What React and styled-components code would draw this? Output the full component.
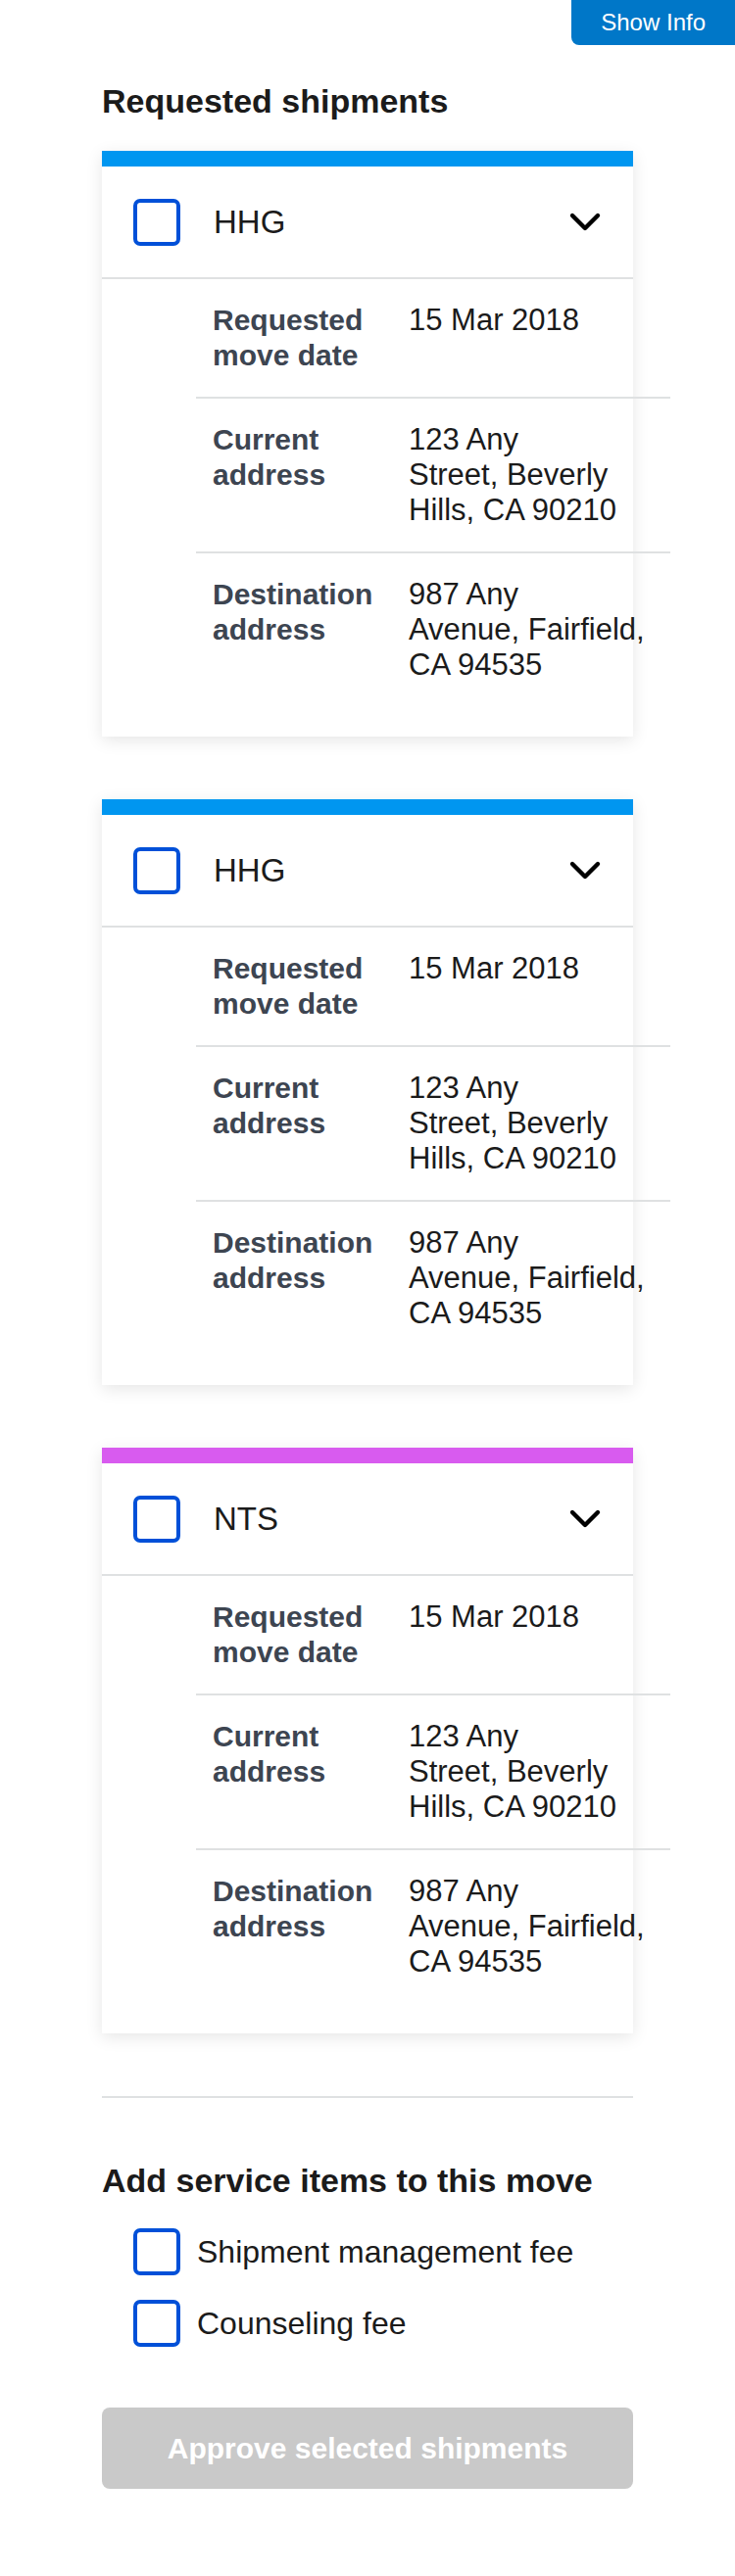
import React from "react";
import styled, { createGlobalStyle } from "styled-components";

const GlobalStyle = createGlobalStyle`
  html, body {
    margin: 0;
    padding: 0;
    background: #ffffff;
  }
  body {
    font-family: "Liberation Sans", Arial, sans-serif;
    color: #1b1b1b;
  }
  * { box-sizing: border-box; }
`;

const Page = styled.div`
  position: relative;
  width: 750px;
  min-height: 2630px;
  padding: 83px 104px 90px;
`;

const ShowInfo = styled.button`
  position: absolute;
  top: 0;
  right: 0;
  height: 46px;
  padding: 0 30px;
  border: none;
  border-bottom-left-radius: 8px;
  background: #0077c8;
  color: #ffffff;
  font-family: "Liberation Sans", Arial, sans-serif;
  font-size: 24px;
  line-height: 46px;
`;

const Heading = styled.h2`
  margin: ${(p) => p.$top || 0}px 0 0;
  font-size: 34px;
  line-height: 40px;
  font-weight: 700;
  color: #1b1b1b;
`;

const CardList = styled.div`
  display: flex;
  flex-direction: column;
  gap: 64px;
  margin-top: 31px;
`;

const Card = styled.section`
  background: #ffffff;
  border-top: 16px solid ${(p) => p.$accent};
  box-shadow: 0 4px 16px rgba(0, 0, 0, 0.1);
  padding-bottom: 31px;
`;

const CardHeader = styled.div`
  display: flex;
  align-items: center;
  height: 115px;
  padding: 0 32px;
  border-bottom: 2px solid #dfe1e2;
`;

const Box = styled.span`
  flex: none;
  width: 48px;
  height: 48px;
  border: 4px solid #0050d8;
  border-radius: 7px;
  background: #ffffff;
`;

const ShipmentType = styled.span`
  margin-left: 34px;
  font-size: 33px;
  line-height: 40px;
  color: #1b1b1b;
`;

const Chevron = styled.svg`
  margin-left: auto;
  flex: none;
`;

const InfoTable = styled.div`
  margin-left: 96px;
  width: 484px;
`;

const InfoRow = styled.div`
  display: grid;
  grid-template-columns: 200px 1fr;
  padding: 24px 0 24px 17px;
  border-top: ${(p) => (p.$first ? "none" : "2px solid #dfe1e2")};
  font-size: 30px;
  line-height: 36px;
`;

const Label = styled.div`
  font-weight: 700;
  color: #3d4551;
  padding-right: 16px;
`;

const Value = styled.div`
  color: #1b1b1b;
  font-size: 31px;
`;

const ValueLine = styled.span`
  display: block;
  white-space: nowrap;
`;

const Divider = styled.hr`
  margin: 64px 0 0;
  border: none;
  border-top: 2px solid #dfe1e2;
`;

const ServiceList = styled.div`
  display: flex;
  flex-direction: column;
  gap: 25px;
  margin-top: 29px;
  padding-left: 32px;
`;

const ServiceRow = styled.label`
  display: flex;
  align-items: center;
  gap: 17px;
  height: 48px;
  font-size: 32px;
  line-height: 36px;
  color: #1b1b1b;
`;

const ApproveButton = styled.button`
  display: block;
  width: 100%;
  height: 83px;
  margin-top: 62px;
  border: none;
  border-radius: 8px;
  background: #c9c9c9;
  color: #ffffff;
  font-family: "Liberation Sans", Arial, sans-serif;
  font-size: 30px;
  font-weight: 700;
`;

const shipments = [
  { type: "HHG", accent: "#0096f0" },
  { type: "HHG", accent: "#0096f0" },
  { type: "NTS", accent: "#d85bef" },
];

const rows = [
  ["Requested move date", ["15 Mar 2018"]],
  ["Current address", ["123 Any", "Street, Beverly", "Hills, CA 90210"]],
  ["Destination address", ["987 Any", "Avenue, Fairfield,", "CA 94535"]],
];

function ChevronDown() {
  return (
    <Chevron width="34" height="22" viewBox="0 0 34 22" aria-hidden="true">
      <polyline
        points="4,4 17,17 30,4"
        fill="none"
        stroke="#000000"
        strokeWidth="4.4"
        strokeLinecap="round"
        strokeLinejoin="round"
      />
    </Chevron>
  );
}

export default function App() {
  return (
    <>
      <GlobalStyle />
      <Page>
        <ShowInfo type="button">Show Info</ShowInfo>
        <Heading>Requested shipments</Heading>
        <CardList>
          {shipments.map((s, i) => (
            <Card key={i} $accent={s.accent}>
              <CardHeader>
                <Box />
                <ShipmentType>{s.type}</ShipmentType>
                <ChevronDown />
              </CardHeader>
              <InfoTable>
                {rows.map(([label, lines], j) => (
                  <InfoRow key={label} $first={j === 0}>
                    <Label>{label}</Label>
                    <Value>
                      {lines.map((line) => (
                        <ValueLine key={line}>{line}</ValueLine>
                      ))}
                    </Value>
                  </InfoRow>
                ))}
              </InfoTable>
            </Card>
          ))}
        </CardList>
        <Divider />
        <Heading $top={64}>Add service items to this move</Heading>
        <ServiceList>
          <ServiceRow>
            <Box />
            Shipment management fee
          </ServiceRow>
          <ServiceRow>
            <Box />
            Counseling fee
          </ServiceRow>
        </ServiceList>
        <ApproveButton type="button" disabled>
          Approve selected shipments
        </ApproveButton>
      </Page>
    </>
  );
}
